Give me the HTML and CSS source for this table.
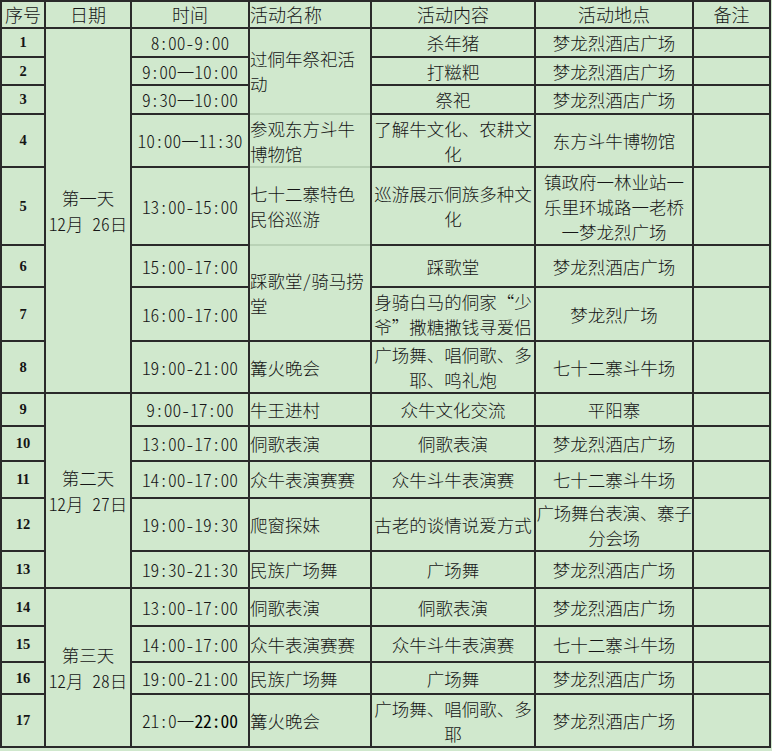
FILE: index.html
```html
<!DOCTYPE html>
<html lang="zh-CN">
<head>
<meta charset="utf-8">
<title>活动安排</title>
<link rel="stylesheet" href="styles.css">
</head>
<body>
<div class="sheet">
  <div class="c hd">序号</div>
  <div class="c hd">日期</div>
  <div class="c hd">时间</div>
  <div class="c hd name">活动名称</div>
  <div class="c hd">活动内容</div>
  <div class="c hd">活动地点</div>
  <div class="c hd">备注</div>

  <div class="c no">1</div>
  <div class="c date d1">第一天<br>12月 26日</div>
  <div class="c tm">8:00-9:00</div>
  <div class="c name s3">过侗年祭祀活<br>动</div>
  <div class="c">杀年猪</div>
  <div class="c">梦龙烈酒店广场</div>
  <div class="c"></div>

  <div class="c no">2</div>
  <div class="c tm">9:00一10:00</div>
  <div class="c">打糍粑</div>
  <div class="c">梦龙烈酒店广场</div>
  <div class="c"></div>

  <div class="c no">3</div>
  <div class="c tm">9:30一10:00</div>
  <div class="c">祭祀</div>
  <div class="c">梦龙烈酒店广场</div>
  <div class="c"></div>

  <div class="c no">4</div>
  <div class="c tm">10:00一11:30</div>
  <div class="c name soft">参观东方斗牛<br>博物馆</div>
  <div class="c">了解牛文化、农耕文<br>化</div>
  <div class="c">东方斗牛博物馆</div>
  <div class="c"></div>

  <div class="c no">5</div>
  <div class="c tm">13:00-15:00</div>
  <div class="c name soft">七十二寨特色<br>民俗巡游</div>
  <div class="c">巡游展示侗族多种文<br>化</div>
  <div class="c">镇政府一林业站一<br>乐里环城路一老桥<br>一梦龙烈广场</div>
  <div class="c"></div>

  <div class="c no">6</div>
  <div class="c tm">15:00-17:00</div>
  <div class="c name soft s2">踩歌堂/骑马捞<br>堂</div>
  <div class="c">踩歌堂</div>
  <div class="c">梦龙烈酒店广场</div>
  <div class="c"></div>

  <div class="c no">7</div>
  <div class="c tm">16:00-17:00</div>
  <div class="c">身骑白马的侗家“少<br>爷”撒糖撒钱寻爱侣</div>
  <div class="c">梦龙烈广场</div>
  <div class="c"></div>

  <div class="c no">8</div>
  <div class="c tm">19:00-21:00</div>
  <div class="c name">篝火晚会</div>
  <div class="c">广场舞、唱侗歌、多<br>耶、鸣礼炮</div>
  <div class="c">七十二寨斗牛场</div>
  <div class="c"></div>

  <div class="c no">9</div>
  <div class="c date d2">第二天<br>12月 27日</div>
  <div class="c tm">9:00-17:00</div>
  <div class="c name">牛王进村</div>
  <div class="c">众牛文化交流</div>
  <div class="c">平阳寨</div>
  <div class="c"></div>

  <div class="c no">10</div>
  <div class="c tm">13:00-17:00</div>
  <div class="c name">侗歌表演</div>
  <div class="c">侗歌表演</div>
  <div class="c">梦龙烈酒店广场</div>
  <div class="c"></div>

  <div class="c no">11</div>
  <div class="c tm">14:00-17:00</div>
  <div class="c name">众牛表演赛赛</div>
  <div class="c">众牛斗牛表演赛</div>
  <div class="c">七十二寨斗牛场</div>
  <div class="c"></div>

  <div class="c no">12</div>
  <div class="c tm">19:00-19:30</div>
  <div class="c name">爬窗探妹</div>
  <div class="c">古老的谈情说爱方式</div>
  <div class="c tight">广场舞台表演、寨子<br>分会场</div>
  <div class="c"></div>

  <div class="c no">13</div>
  <div class="c tm">19:30-21:30</div>
  <div class="c name">民族广场舞</div>
  <div class="c">广场舞</div>
  <div class="c">梦龙烈酒店广场</div>
  <div class="c"></div>

  <div class="c no">14</div>
  <div class="c date d3">第三天<br>12月 28日</div>
  <div class="c tm">13:00-17:00</div>
  <div class="c name">侗歌表演</div>
  <div class="c">侗歌表演</div>
  <div class="c">梦龙烈酒店广场</div>
  <div class="c"></div>

  <div class="c no">15</div>
  <div class="c tm">14:00-17:00</div>
  <div class="c name">众牛表演赛赛</div>
  <div class="c">众牛斗牛表演赛</div>
  <div class="c">七十二寨斗牛场</div>
  <div class="c"></div>

  <div class="c no">16</div>
  <div class="c tm">19:00-21:00</div>
  <div class="c name">民族广场舞</div>
  <div class="c">广场舞</div>
  <div class="c">梦龙烈酒店广场</div>
  <div class="c"></div>

  <div class="c no">17</div>
  <div class="c tm">21:0一<span class="dark">22:00</span></div>
  <div class="c name">篝火晚会</div>
  <div class="c">广场舞、唱侗歌、多<br>耶</div>
  <div class="c">梦龙烈酒店广场</div>
  <div class="c"></div>
</div>
</body>
</html>
```

FILE: styles.css
```css
html, body {
  margin: 0;
  padding: 0;
  background: #d0e8cd;
}

body {
  font-family: "Noto Sans CJK SC", "Noto Sans", sans-serif;
  font-size: 17.5px;
  font-weight: 300;
  font-feature-settings: "hwid" 1;
  color: #161616;
}

.sheet {
  display: inline-grid;
  vertical-align: top;
  grid-template-columns: 42px 84px 116px 120px 162px 156px 75px;
  grid-template-rows: 25px 27px 26px 27px 51px 76px 40px 52px 50px 31px 33px 35px 51px 35px 36px 34px 30px 51px;
  gap: 2px;
  padding: 2px;
  background: #2a2a2a;
}

.c {
  background: #d0e8cd;
  display: flex;
  align-items: center;
  justify-content: center;
  text-align: center;
  line-height: 25px;
  white-space: nowrap;
  overflow: visible;
}

.hd {
  font-size: 18px;
}

.name {
  justify-content: flex-start;
  text-align: left;
  padding-left: 0;
}

.no {
  font-family: "Liberation Serif", "Times New Roman", serif;
  font-weight: bold;
  font-size: 14.5px;
  font-feature-settings: normal;
  color: #151515;
}

.date {
  line-height: 26px;
}

.d1 { grid-row: span 8; }
.d2 { grid-row: span 5; }
.d3 { grid-row: span 4; }
.s3 { grid-row: span 3; }
.s2 { grid-row: span 2; }

.soft {
  margin-top: -2px;
  border-top: 2px solid #b9d2b6;
}

.tight {
  letter-spacing: -0.3px;
}

.dark {
  color: #000;
  font-weight: 400;
}
```
